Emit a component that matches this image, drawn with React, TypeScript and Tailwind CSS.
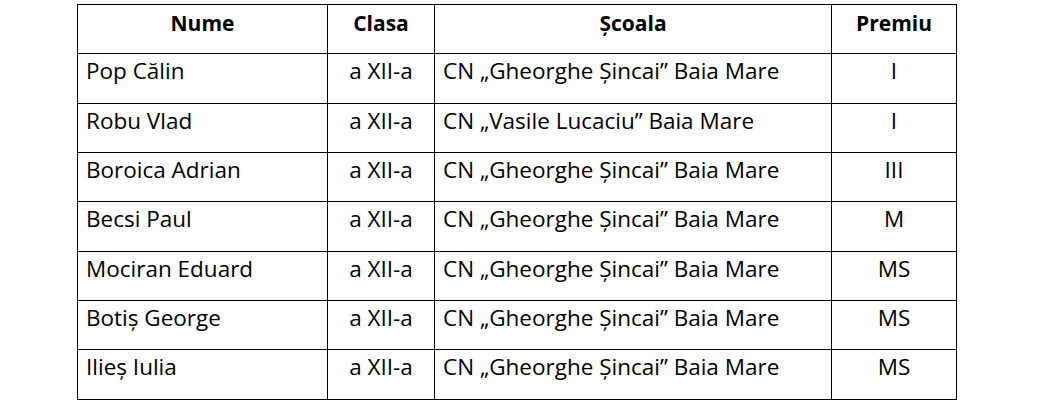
const rows = [
  { nume: "Pop Călin", clasa: "a XII-a", scoala: "CN „Gheorghe Șincai” Baia Mare", premiu: "I" },
  { nume: "Robu Vlad", clasa: "a XII-a", scoala: "CN „Vasile Lucaciu” Baia Mare", premiu: "I" },
  { nume: "Boroica Adrian", clasa: "a XII-a", scoala: "CN „Gheorghe Șincai” Baia Mare", premiu: "III" },
  { nume: "Becsi Paul", clasa: "a XII-a", scoala: "CN „Gheorghe Șincai” Baia Mare", premiu: "M" },
  { nume: "Mociran Eduard", clasa: "a XII-a", scoala: "CN „Gheorghe Șincai” Baia Mare", premiu: "MS" },
  { nume: "Botiș George", clasa: "a XII-a", scoala: "CN „Gheorghe Șincai” Baia Mare", premiu: "MS" },
  { nume: "Ilieș Iulia", clasa: "a XII-a", scoala: "CN „Gheorghe Șincai” Baia Mare", premiu: "MS" },
];

const cell = "border border-black align-top px-[8px] pt-[4px] leading-[26px]";
const head = "border border-black align-top px-[8px] pt-[5px] leading-[26px] font-bold text-center text-[21px]";

export default function App() {
  return (
    <div className="w-[1037px] h-[404px] bg-white pt-[4px] pl-[77px] font-['Open_Sans','Noto_Sans',sans-serif] text-[22.5px] text-black">
      <table className="table-fixed border-collapse w-[879px]">
        <colgroup>
          <col className="w-[250px]" />
          <col className="w-[107px]" />
          <col className="w-[397px]" />
          <col className="w-[125px]" />
        </colgroup>
        <thead>
          <tr className="h-[49.33px]">
            <th className={head}>Nume</th>
            <th className={head}>Clasa</th>
            <th className={head}>Școala</th>
            <th className={head}>Premiu</th>
          </tr>
        </thead>
        <tbody>
          {rows.map((r) => (
            <tr key={r.nume} className="h-[49.33px]">
              <td className={`${cell} text-left`}>{r.nume}</td>
              <td className={`${cell} text-center`}>{r.clasa}</td>
              <td className={`${cell} text-left`}>{r.scoala}</td>
              <td className={`${cell} text-center`}>{r.premiu}</td>
            </tr>
          ))}
        </tbody>
      </table>
    </div>
  );
}
